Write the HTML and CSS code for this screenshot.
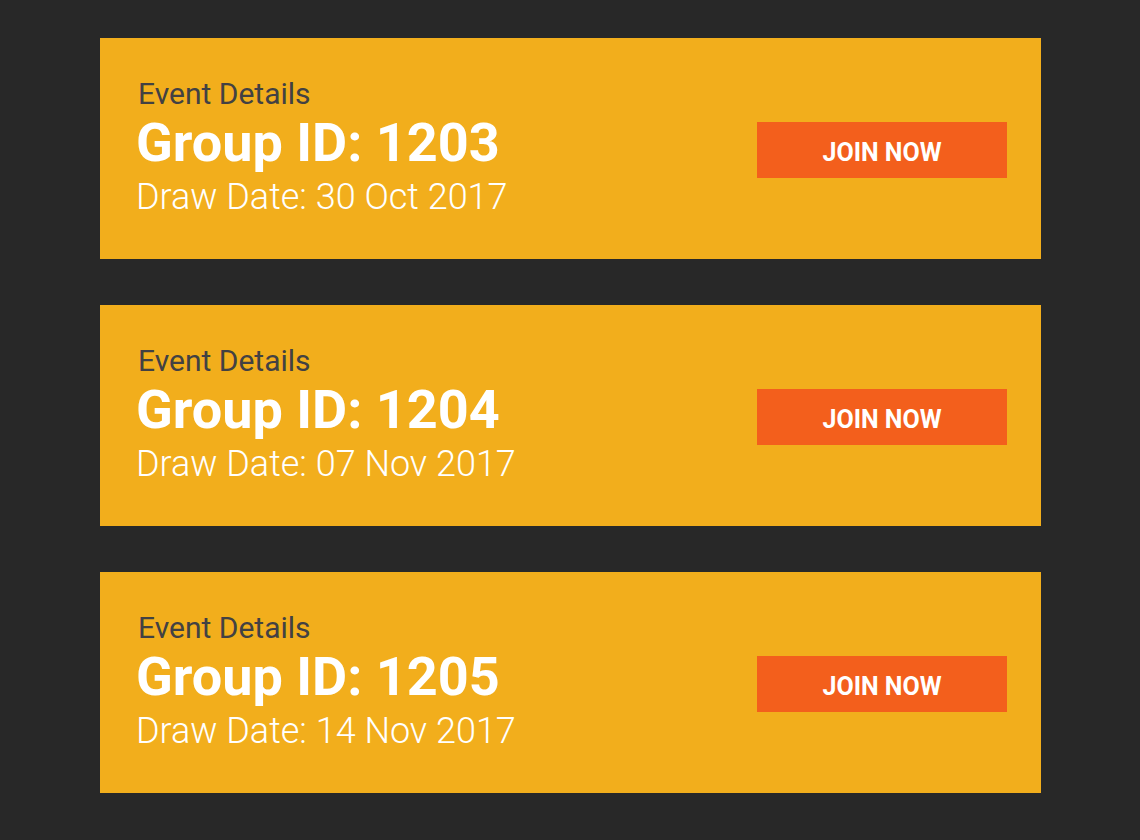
FILE: index.html
```html
<!DOCTYPE html>
<html lang="en">
<head>
<meta charset="utf-8">
<title>Draw Events</title>
<link rel="stylesheet" href="styles.css">
</head>
<body>
<main class="events">
  <article class="card">
    <div class="details">
      <p class="label">Event Details</p>
      <h2 class="group">Group ID: 1203</h2>
      <p class="date">Draw Date: 30 Oct 2017</p>
    </div>
    <button class="join" type="button">JOIN NOW</button>
  </article>
  <article class="card">
    <div class="details">
      <p class="label">Event Details</p>
      <h2 class="group">Group ID: 1204</h2>
      <p class="date">Draw Date: 07 Nov 2017</p>
    </div>
    <button class="join" type="button">JOIN NOW</button>
  </article>
  <article class="card">
    <div class="details">
      <p class="label">Event Details</p>
      <h2 class="group">Group ID: 1205</h2>
      <p class="date">Draw Date: 14 Nov 2017</p>
    </div>
    <button class="join" type="button">JOIN NOW</button>
  </article>
</main>
</body>
</html>
```
FILE: styles.css
```css
* {
  box-sizing: border-box;
}

body {
  margin: 0;
  background: #282828;
  font-family: Roboto, "Liberation Sans", sans-serif;
}

.events {
  display: flex;
  flex-direction: column;
  gap: 46px;
  padding: 38px 99px 46px 100px;
}

.card {
  display: flex;
  align-items: center;
  justify-content: space-between;
  gap: 24px;
  padding: 38px 34px 35px 36px;
  background: #f2ae1c;
}

.details {
  padding-bottom: 4px;
}

.label,
.group,
.date {
  margin: 0;
}

.label {
  padding-left: 2px;
  color: #424143;
  font-size: 30px;
  font-weight: 400;
  line-height: 36px;
}

.group {
  color: #fff;
  font-size: 54px;
  font-weight: 700;
  line-height: 62px;
}

.date {
  color: #fff;
  font-size: 36px;
  font-weight: 300;
  line-height: 46px;
}

.join {
  flex: 0 1 250px;
  height: 56px;
  padding: 6px 0 0;
  border: 0;
  background: #f35f1c;
  color: #fff;
  font-family: inherit;
  font-size: 25px;
  font-weight: 700;
  line-height: 32px;
  cursor: pointer;
}
```
